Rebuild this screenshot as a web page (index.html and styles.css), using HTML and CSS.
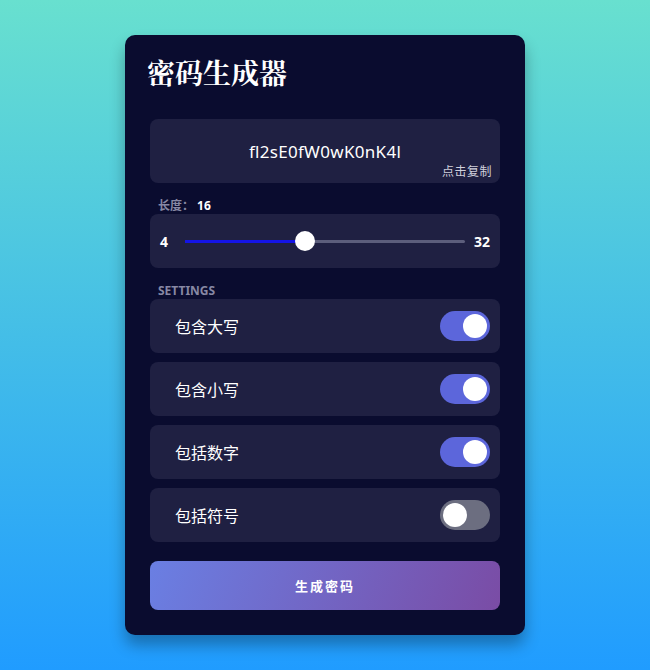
FILE: index.html
```html
<!DOCTYPE html>
<html lang="zh-CN">
<head>
  <meta charset="UTF-8">
  <title>密码生成器</title>
  <link rel="stylesheet" href="styles.css">
</head>
<body>

  <div class="container">
    <h2 class="title">密码生成器</h2>

    <div class="result">
      <span class="result-text">fl2sE0fW0wK0nK4l</span>
      <span class="copy">点击复制</span>
    </div>

    <div class="field-title">长度：<span class="length-val">16</span></div>
    <div class="range-box">
      <span class="range-end">4</span>
      <div class="track"><div class="track-fill" style="width: 43%"></div><div class="thumb" style="left: 43%"></div></div>
      <span class="range-end">32</span>
    </div>

    <div class="field-title upper">Settings</div>
    <div class="settings">
      <div class="setting"><span>包含大写</span><div class="switch on"></div></div>
      <div class="setting"><span>包含小写</span><div class="switch on"></div></div>
      <div class="setting"><span>包括数字</span><div class="switch on"></div></div>
      <div class="setting"><span>包括符号</span><div class="switch"></div></div>
    </div>

    <button class="btn">生成密码</button>
  </div>

</body>
</html>
```

FILE: styles.css
```css
* {
  margin: 0;
  padding: 0;
  box-sizing: border-box;
}

body {
  background: linear-gradient(to bottom, #68e0cf, #209cff);
  height: 100vh;
  overflow: hidden;
  display: flex;
  justify-content: center;
  align-items: center;
  font-family: 'Noto Sans', 'Noto Sans CJK SC', sans-serif;
  color: #fff;
}

.container {
  width: 400px;
  height: 600px;
  background: #0a0c2f;
  border-radius: 10px;
  box-shadow: 0 10px 15px rgba(0, 0, 0, 0.3);
  padding: 18px 25px 25px;
  display: flex;
  flex-direction: column;
}

.title {
  font-family: 'Noto Serif CJK SC', serif;
  font-size: 28px;
  font-weight: bold;
  line-height: 38px;
  margin: 0 0 28px -3px;
}

.result {
  position: relative;
  flex: none;
  height: 64px;
  background: #1f2042;
  border-radius: 8px;
  display: flex;
  justify-content: center;
  align-items: center;
}

.result-text {
  font-size: 17px;
  letter-spacing: 0.3px;
  margin-top: 1px;
}

.copy {
  position: absolute;
  right: 8px;
  bottom: 3px;
  font-size: 12px;
  color: #d0d0dc;
  letter-spacing: 0.5px;
}

.field-title {
  font-size: 12px;
  font-weight: bold;
  color: #8788a4;
  padding-left: 8px;
  line-height: 16px;
  margin: 15px 0 0;
}

.field-title.upper {
  text-transform: uppercase;
  margin-top: 15px;
}

.length-val {
  color: #fff;
  margin-left: 3px;
}

.range-box {
  flex: none;
  height: 54px;
  background: #1f2042;
  border-radius: 8px;
  display: flex;
  align-items: center;
  padding: 0 10px;
}

.range-end {
  font-size: 14px;
  font-weight: bold;
}

.track {
  position: relative;
  flex: 1;
  height: 3px;
  margin: 0 9px 0 17px;
  background: #5c5e7c;
  border-radius: 2px;
}

.track-fill {
  height: 100%;
  background: #1414e6;
}

.thumb {
  position: absolute;
  top: 50%;
  width: 20px;
  height: 20px;
  border-radius: 50%;
  background: #fff;
  transform: translate(-50%, -50%);
}

.settings {
  display: flex;
  flex-direction: column;
  gap: 9px;
}

.setting {
  flex: none;
  height: 54px;
  background: #1f2042;
  border-radius: 8px;
  display: flex;
  align-items: center;
  justify-content: space-between;
  padding: 0 10px 0 25px;
  font-size: 16px;
}

.switch {
  position: relative;
  width: 50px;
  height: 30px;
  border-radius: 15px;
  background: #6c6e80;
}

.switch::after {
  content: '';
  position: absolute;
  top: 3px;
  left: 3px;
  width: 24px;
  height: 24px;
  border-radius: 50%;
  background: #fff;
}

.switch.on {
  background: #5c66db;
}

.switch.on::after {
  left: 23px;
}

.btn {
  flex: none;
  margin-top: 19px;
  height: 49px;
  border: none;
  border-radius: 8px;
  background: linear-gradient(110deg, #6a7fe3, #7a4ca5);
  color: #fff;
  font-family: 'Noto Sans CJK SC', sans-serif;
  font-size: 13px;
  font-weight: bold;
  letter-spacing: 2px;
}
```
